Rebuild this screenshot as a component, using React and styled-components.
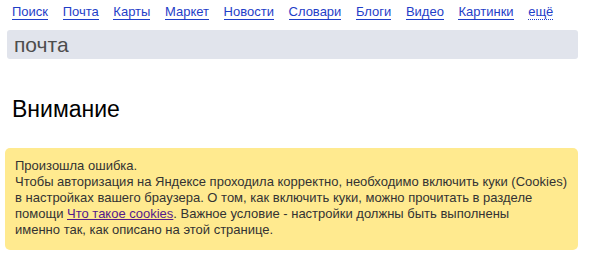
import React from "react";
import styled, { createGlobalStyle } from "styled-components";

const Global = createGlobalStyle`
  html, body { margin: 0; padding: 0; background: #fff; }
  body { font-family: "Liberation Sans", Arial, sans-serif; }
`;

const Page = styled.div`
  width: 594px;
  padding: 0 16px 0 5px;
  box-sizing: border-box;
`;

const Nav = styled.nav`
  display: flex;
  gap: 14.6px;
  padding: 4px 0 0 7px;
  height: 30px;
  box-sizing: border-box;
  font-size: 13px;
  line-height: 16px;
`;

const NavLink = styled.a`
  color: #1f3ec8;
  text-decoration: none;
  border-bottom: ${(p) => (p.$dotted ? "1px dotted #1f3ec8" : "1px solid #1f3ec8")};
  height: 15px;
`;

const Search = styled.div`
  margin-left: 2px;
  height: 29px;
  background: #e1e4ec;
  border-radius: 3px;
  display: flex;
  align-items: center;
  padding-left: 7px;
  font-size: 21px;
  color: #4d4d4d;
`;

const Title = styled.h1`
  margin: 38px 0 0 7px;
  font-weight: normal;
  font-size: 23px;
  line-height: 24px;
  color: #000;
`;

const Notice = styled.div`
  margin-top: 27px;
  background: #ffea8f;
  border-radius: 5px;
  padding: 10px 10px 12px 10px;
  font-size: 13px;
  line-height: 16px;
  color: #333;
`;

const Visited = styled.a`
  color: #551a8b;
  text-decoration: underline;
`;

const links = ["Поиск", "Почта", "Карты", "Маркет", "Новости", "Словари", "Блоги", "Видео", "Картинки"];

export default function App() {
  return (
    <>
      <Global />
      <Page>
        <Nav>
          {links.map((l) => (
            <NavLink key={l} href="#">{l}</NavLink>
          ))}
          <NavLink $dotted href="#">ещё</NavLink>
        </Nav>
        <Search>почта</Search>
        <Title>Внимание</Title>
        <Notice>
          Произошла ошибка.
          <br />
          Чтобы авторизация на Яндексе проходила корректно, необходимо включить куки (Cookies)
          <br />
          в настройках вашего браузера. О том, как включить куки, можно прочитать в разделе
          <br />
          помощи <Visited href="#">Что такое cookies</Visited>. Важное условие - настройки должны быть выполнены
          <br />
          именно так, как описано на этой странице.
        </Notice>
      </Page>
    </>
  );
}
